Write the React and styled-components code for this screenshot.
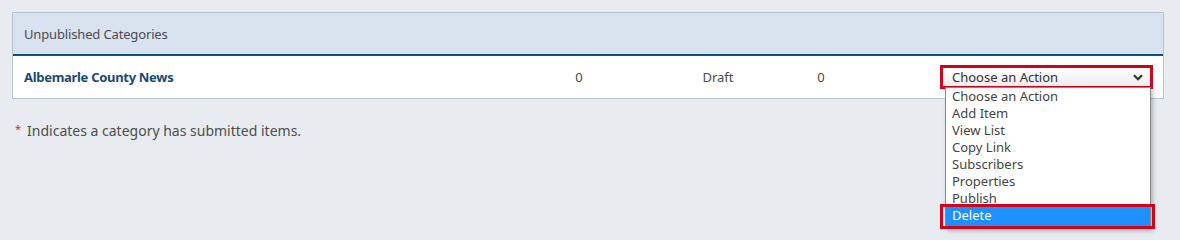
import React from 'react';
import styled, { createGlobalStyle } from 'styled-components';

// page colours
const pageBg = '#e8ecf1';
const panelBorder = '#b7c5d8';
const annotRed = '#d0021b';

const GlobalStyle = createGlobalStyle`
  html, body {
    margin: 0;
    background: ${pageBg};
  }
  body {
    font-family: 'Noto Sans', 'Open Sans', sans-serif;
    color: #4a4a4a;
  }
`;

const Page = styled.div`
  box-sizing: border-box;
  min-height: 100vh;
  padding: 12px 16px 0 12px;
`;

// panel with header + rows
const Panel = styled.section`
  background: #fff;
  border: 1px solid ${panelBorder};
`;

const PanelHeader = styled.div`
  height: 41px;
  display: flex;
  align-items: center;
  padding-left: 11px;
  background: #d9e3ef;
  border-bottom: 2px solid #0b5186;
  font-size: 13px;
  letter-spacing: -0.15px;
  color: #4a4a55;
`;

const Row = styled.div`
  height: 42px;
  display: flex;
  align-items: center;
  padding-left: 11px;
  font-size: 13px;
`;

const Name = styled.a`
  width: 520px;
  font-weight: 700;
  letter-spacing: -0.3px;
  color: #1b4a72;
  text-decoration: none;
`;

const Cell = styled.div`
  width: 70px;
  margin-left: ${(p) => p.$gap || 0}px;
  text-align: center;
  color: #4a4a4a;
`;

// select + its open list, list lies over the page below
const SelectWrap = styled.div`
  position: relative;
  margin-left: 84px;
  width: 213px;
`;

const SelectBox = styled.div`
  height: 18px;
  display: flex;
  align-items: center;
  justify-content: space-between;
  padding: 0 7px 0 9px;
  border: 3px solid ${annotRed};
  background: linear-gradient(#ffffff, #eeeeee);
  color: #333;
  font-size: 13px;
`;

const Chevron = styled.svg`
  width: 10px;
  height: 7px;
`;

const OptionList = styled.ul`
  position: absolute;
  top: 22px;
  left: 5px;
  width: 204px;
  margin: 0;
  padding: 0 0 2px;
  list-style: none;
  background: #fff;
  border: 1px solid #8a8a8a;
  box-shadow: 2px 2px 4px rgba(0, 0, 0, 0.25);
  font-size: 13px;
  z-index: 5;
`;

const Option = styled.li`
  position: relative;
  height: ${(p) => (p.$active ? 19 : 17)}px;
  line-height: 17px;
  padding-left: 6px;
  color: ${(p) => (p.$active ? '#fff' : '#444')};
  background: ${(p) => (p.$active ? '#1e90ff' : 'transparent')};

  ${(p) =>
    p.$active &&
    `
    &::after {
      content: '';
      position: absolute;
      left: -6px;
      right: -5px;
      top: -3px;
      bottom: -3px;
      border: 3px solid ${annotRed};
    }
  `}
`;

const Footnote = styled.p`
  margin: 22px 0 0 3px;
  font-size: 14px;
  color: #4d4d4d;

  span {
    display: inline-block;
    vertical-align: top;
    font-size: 11px;
    color: #c0392b;
    margin-right: 6px;
  }
`;

const actions = [
  'Choose an Action',
  'Add Item',
  'View List',
  'Copy Link',
  'Subscribers',
  'Properties',
  'Publish',
  'Delete',
];

export default function App() {
  return (
    <>
      <GlobalStyle />
      <Page>
        <Panel>
          <PanelHeader>Unpublished Categories</PanelHeader>
          <Row>
            <Name href="#">Albemarle County News</Name>
            <Cell>0</Cell>
            <Cell $gap={69}>Draft</Cell>
            <Cell $gap={33}>0</Cell>
            <SelectWrap>
              <SelectBox>
                Choose an Action
                <Chevron viewBox="0 0 10 7">
                  <path d="M1 1.2 L5 5.2 L9 1.2" fill="none" stroke="#333" strokeWidth="2.2" />
                </Chevron>
              </SelectBox>
              <OptionList>
                {actions.map((a) => (
                  <Option key={a} $active={a === 'Delete'}>
                    {a}
                  </Option>
                ))}
              </OptionList>
            </SelectWrap>
          </Row>
        </Panel>
        <Footnote>
          <span>*</span>Indicates a category has submitted items.
        </Footnote>
      </Page>
    </>
  );
}
